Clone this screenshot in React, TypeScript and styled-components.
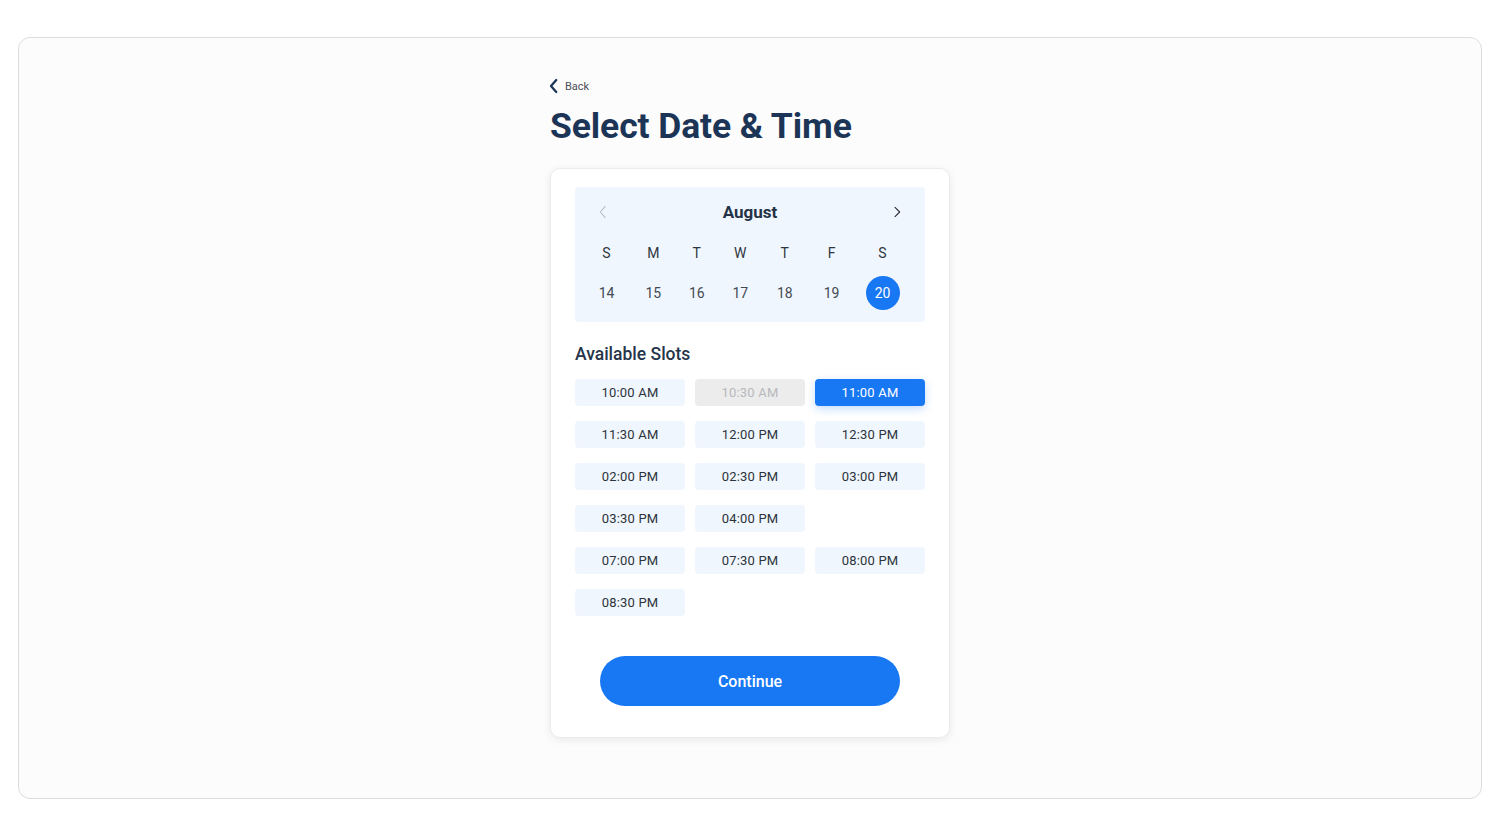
import React, { useState } from "react";
import styled, { createGlobalStyle } from "styled-components";

const GlobalStyle = createGlobalStyle`
  html, body {
    margin: 0;
    padding: 0;
    background: #ffffff;
    font-family: Roboto, "Liberation Sans", sans-serif;
  }
  * { box-sizing: border-box; }
`;

const Frame = styled.div`
  margin: 37px 18px;
  height: 762px;
  border: 1px solid #dcdcdc;
  border-radius: 12px;
  background: #fcfcfc;
  display: flex;
  justify-content: center;
`;

const Column = styled.div`
  width: 400px;
  padding-top: 40px;
  display: flex;
  flex-direction: column;
`;

const BackLink = styled.button`
  display: flex;
  align-items: center;
  gap: 2px;
  border: none;
  background: none;
  padding: 0;
  margin-left: -5px;
  font-family: inherit;
  font-size: 11px;
  color: #4a4f57;
  cursor: pointer;
  align-self: flex-start;
  height: 16px;
`;

const Title = styled.h1`
  margin: 10px 0 20px;
  font-size: 35.5px;
  line-height: 44px;
  font-weight: 700;
  color: #1c3557;
  letter-spacing: -0.1px;
`;

const Card = styled.div`
  background: #ffffff;
  border: 1px solid #ececec;
  border-radius: 10px;
  box-shadow: 0 2px 8px rgba(0, 0, 0, 0.08);
  padding: 18px 24px 31px;
  display: flex;
  flex-direction: column;
`;

const Calendar = styled.div`
  background: #f0f6fd;
  border-radius: 4px;
  padding: 10px 15px 9px 7px;
`;

const MonthRow = styled.div`
  display: flex;
  align-items: center;
  justify-content: space-between;
  height: 30px;
  margin-bottom: 6px;
  padding: 0 5px 0 13px;
`;

const MonthName = styled.div`
  font-size: 17px;
  font-weight: 700;
  color: #233247;
`;

const ArrowBtn = styled.button<{ $muted?: boolean }>`
  border: none;
  background: none;
  padding: 0;
  display: flex;
  color: ${(p) => (p.$muted ? "#b5bcc6" : "#2a2f36")};
  cursor: pointer;
`;

const Week = styled.div`
  display: grid;
  grid-template-columns: 49px 44.5px 42.5px 44.5px 44.5px 49px 53px;
  align-items: center;
  justify-items: center;
`;

const DayLabel = styled.div`
  height: 40px;
  display: flex;
  align-items: center;
  font-size: 14px;
  color: #30363e;
`;

const DayNum = styled.div<{ $active?: boolean }>`
  width: 34px;
  height: 34px;
  margin: 3px 0;
  border-radius: 50%;
  display: flex;
  align-items: center;
  justify-content: center;
  font-size: 14px;
  color: ${(p) => (p.$active ? "#ffffff" : "#444a52")};
  background: ${(p) => (p.$active ? "#1877f2" : "transparent")};
  cursor: pointer;
`;

const SlotsTitle = styled.h2`
  margin: 21px 0 14px;
  font-size: 17.5px;
  font-weight: 500;
  color: #26354a;
  line-height: 22px;
`;

const SlotGrid = styled.div`
  display: grid;
  grid-template-columns: repeat(3, 110px);
  column-gap: 10px;
  row-gap: 15px;
`;

const Slot = styled.button<{ $state: "idle" | "off" | "on" }>`
  height: 27px;
  border: none;
  border-radius: 4px;
  font-family: inherit;
  font-size: 13px;
  letter-spacing: 0.2px;
  cursor: ${(p) => (p.$state === "off" ? "default" : "pointer")};
  background: ${(p) =>
    p.$state === "on" ? "#1877f2" : p.$state === "off" ? "#ececec" : "#f0f6fd"};
  color: ${(p) =>
    p.$state === "on" ? "#ffffff" : p.$state === "off" ? "#b7b9bc" : "#2c333b"};
  box-shadow: ${(p) =>
    p.$state === "on" ? "0 3px 8px rgba(24, 119, 242, 0.25)" : "none"};
`;

const Continue = styled.button`
  margin: 40px auto 0;
  width: 300px;
  height: 50px;
  border: none;
  border-radius: 25px;
  background: #1877f2;
  color: #ffffff;
  font-family: inherit;
  font-size: 16px;
  font-weight: 500;
  cursor: pointer;
`;

const days = [
  ["S", "14"],
  ["M", "15"],
  ["T", "16"],
  ["W", "17"],
  ["T", "18"],
  ["F", "19"],
  ["S", "20"],
];

const slots: { t: string; off?: boolean }[] = [
  { t: "10:00 AM" },
  { t: "10:30 AM", off: true },
  { t: "11:00 AM" },
  { t: "11:30 AM" },
  { t: "12:00 PM" },
  { t: "12:30 PM" },
  { t: "02:00 PM" },
  { t: "02:30 PM" },
  { t: "03:00 PM" },
  { t: "03:30 PM" },
  { t: "04:00 PM" },
  { t: "" },
  { t: "07:00 PM" },
  { t: "07:30 PM" },
  { t: "08:00 PM" },
  { t: "08:30 PM" },
];

const Chevron = ({ dir, size = 14, w = 1.6 }: { dir: "left" | "right"; size?: number; w?: number }) => (
  <svg width={size} height={size} viewBox="0 0 24 24" fill="none" stroke="currentColor" strokeWidth={w} strokeLinecap="round" strokeLinejoin="round">
    {dir === "left" ? <path d="M15 4 8 12l7 8" /> : <path d="M9 5l7 7-7 7" />}
  </svg>
);

export default function App() {
  const [day, setDay] = useState("20");
  const [slot, setSlot] = useState("11:00 AM");

  return (
    <>
      <GlobalStyle />
      <Frame>
        <Column>
          <BackLink>
            <span style={{ color: "#1c3557", display: "flex" }}>
              <Chevron dir="left" size={18} w={3} />
            </span>
            Back
          </BackLink>
          <Title>Select Date &amp; Time</Title>
          <Card>
            <Calendar>
              <MonthRow>
                <ArrowBtn $muted>
                  <Chevron dir="left" size={16} />
                </ArrowBtn>
                <MonthName>August</MonthName>
                <ArrowBtn>
                  <Chevron dir="right" size={16} />
                </ArrowBtn>
              </MonthRow>
              <Week>
                {days.map(([d], i) => (
                  <DayLabel key={i}>{d}</DayLabel>
                ))}
                {days.map(([, n]) => (
                  <DayNum key={n} $active={day === n} onClick={() => setDay(n)}>
                    {n}
                  </DayNum>
                ))}
              </Week>
            </Calendar>
            <SlotsTitle>Available Slots</SlotsTitle>
            <SlotGrid>
              {slots.map((s, i) =>
                s.t ? (
                  <Slot
                    key={i}
                    $state={s.off ? "off" : slot === s.t ? "on" : "idle"}
                    onClick={() => !s.off && setSlot(s.t)}
                  >
                    {s.t}
                  </Slot>
                ) : (
                  <span key={i} />
                )
              )}
            </SlotGrid>
            <Continue>Continue</Continue>
          </Card>
        </Column>
      </Frame>
    </>
  );
}
